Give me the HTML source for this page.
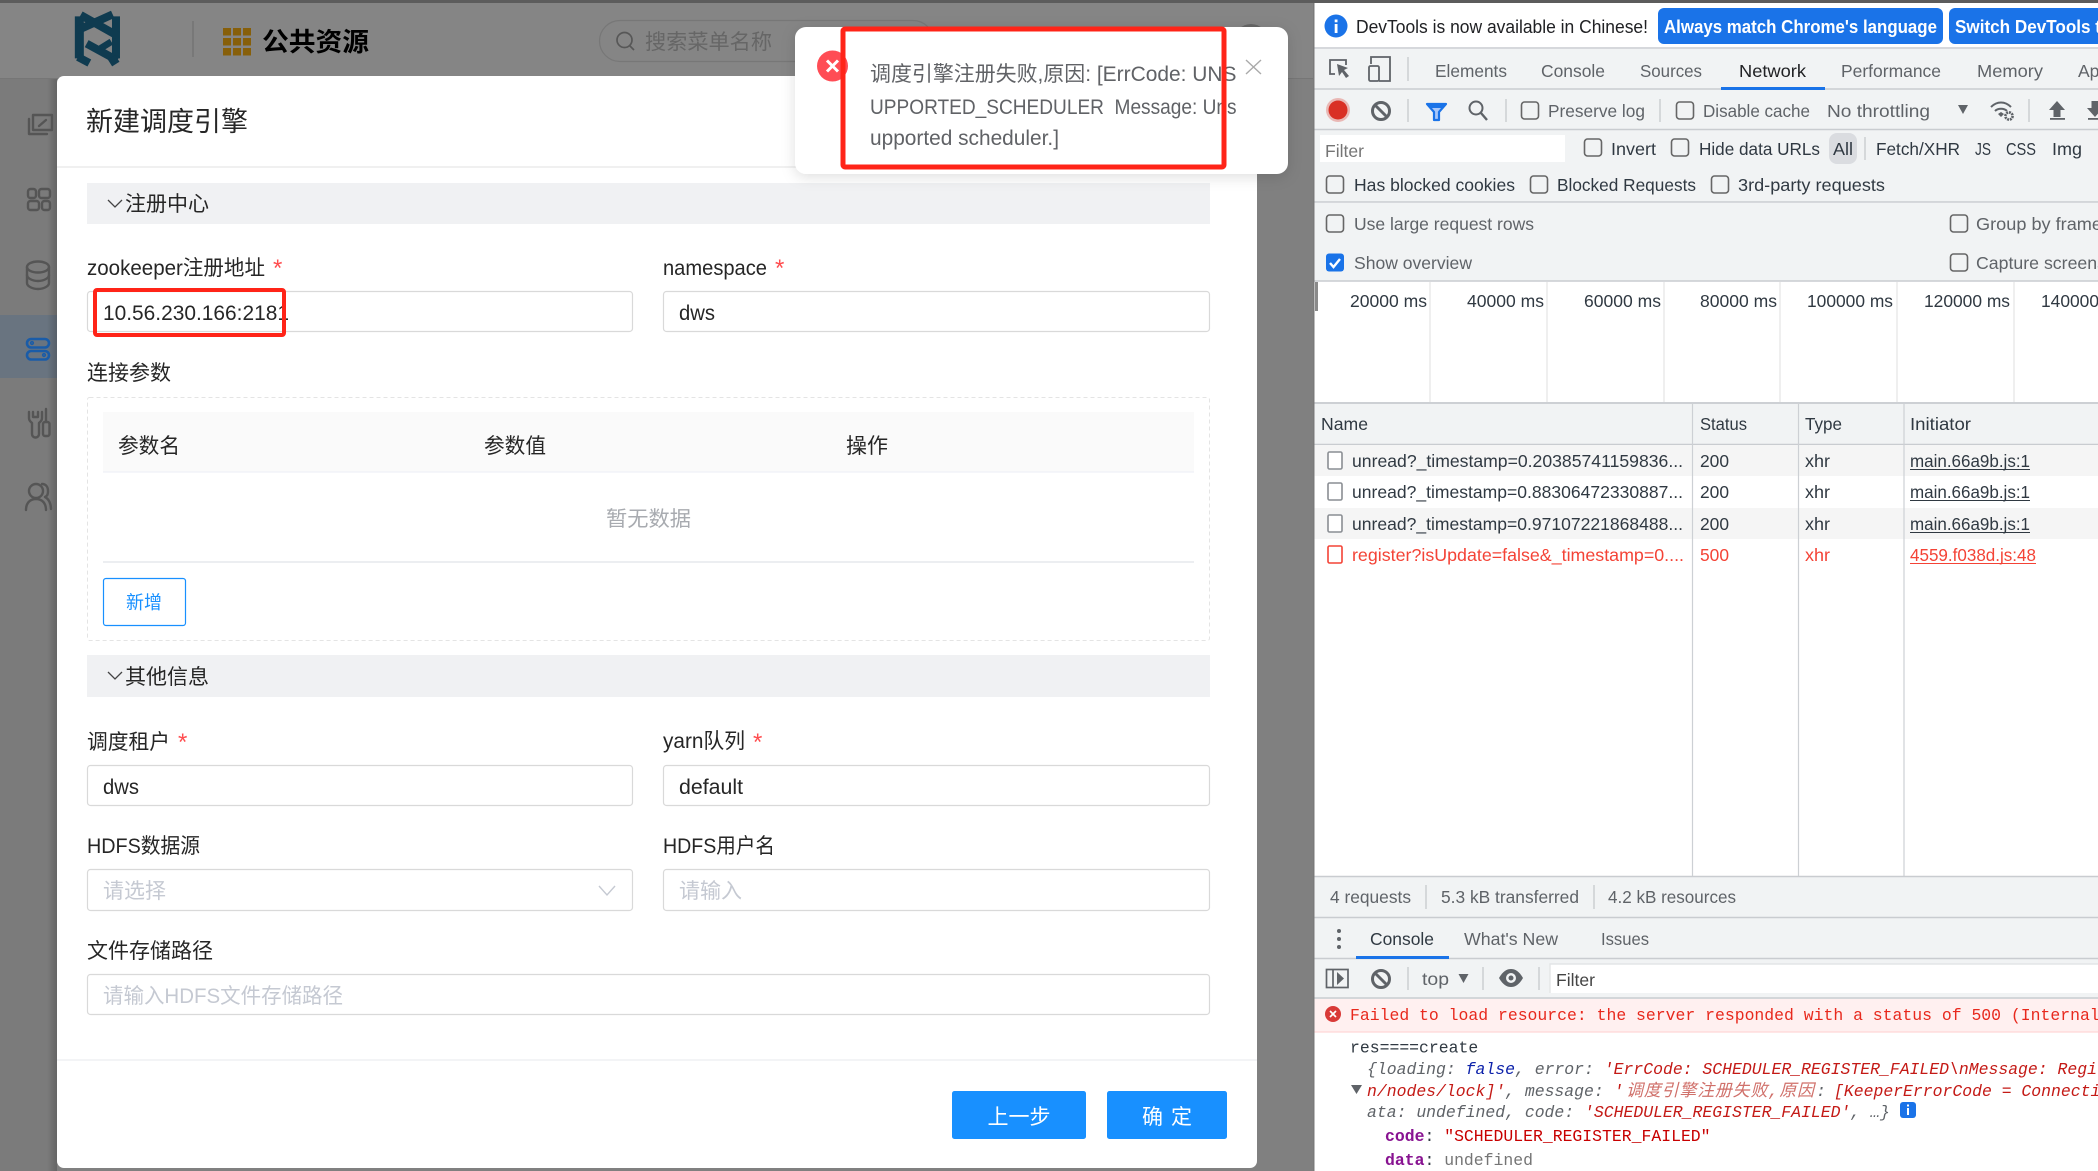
<!DOCTYPE html>
<html lang="zh">
<head>
<meta charset="utf-8">
<title>新建调度引擎</title>
<style>
html,body{margin:0;padding:0;width:2098px;height:1171px;overflow:hidden;background:#808080}
svg{display:block;font-family:"Liberation Sans","Noto Sans CJK SC",sans-serif}
.m{font-family:"Liberation Mono","Noto Sans CJK SC",monospace;font-size:16.45px}
.l{font-size:21px;fill:#262626}
.d{font-size:17.5px;fill:#5f6368}
.k{font-size:17.5px;fill:#303942}
.ck{fill:none;stroke:#666;stroke-width:1.6}
.ic{fill:none;stroke:#555;stroke-width:2.4;stroke-linecap:round;stroke-linejoin:round}
.inp{fill:#fff;stroke:#d9d9d9;stroke-width:1.2}
.sep{stroke:#c9ccd0;stroke-width:1.4}
</style>
</head>
<body>
<svg xmlns="http://www.w3.org/2000/svg" width="2098" height="1171" viewBox="0 0 2098 1171">
<defs>
<linearGradient id="sh" x1="0" x2="1" y1="0" y2="0"><stop offset="0" stop-color="#000" stop-opacity="0"/><stop offset="1" stop-color="#000" stop-opacity=".18"/></linearGradient>
<filter id="ts" x="-10%" y="-20%" width="120%" height="150%"><feDropShadow dx="0" dy="3" stdDeviation="7" flood-color="#000" flood-opacity=".13"/></filter>
</defs>

<!-- page behind overlay -->
<rect width="2098" height="1171" fill="#808080"/>
<rect width="1314" height="79" fill="#858585"/>
<rect y="0" width="2098" height="3" fill="#5c5c5c"/>
<rect y="79" width="57" height="1092" fill="#7b7b7b"/>
<rect y="315" width="57" height="63" fill="#697480"/>
<rect x="47" y="79" width="10" height="1092" fill="url(#sh)"/>
<line x1="0" x2="1314" y1="78.5" y2="78.5" stroke="#767676"/>

<!-- logo -->
<g transform="translate(60 5) scale(.3333)" fill="none" stroke="#0f3b50" stroke-width="24">
<path d="M58 34V160" stroke-width="27"/>
<path d="M168 34V160"/>
<path d="M52 76L158 28"/>
<path d="M62 30L172 92"/>
<path d="M80 116L172 166"/>
<path d="M154 110L122 130" stroke-width="20"/>
<path d="M54 156L88 174"/>
<path d="M172 160L150 174"/>
</g>
<line x1="193" x2="193" y1="21" y2="57" stroke="#757575" stroke-width="1.6"/>
<g fill="#875f0a">
<rect x="223" y="28" width="8" height="7.5"/><rect x="233" y="28" width="8" height="7.5"/><rect x="243" y="28" width="8" height="7.5"/>
<rect x="223" y="38" width="8" height="7.5"/><rect x="233" y="38" width="8" height="7.5"/><rect x="243" y="38" width="8" height="7.5"/>
<rect x="223" y="48" width="8" height="7.5"/><rect x="233" y="48" width="8" height="7.5"/><rect x="243" y="48" width="8" height="7.5"/>
</g>
<text x="262" y="51" font-size="26" font-weight="700" fill="#000" textLength="107" lengthAdjust="spacingAndGlyphs">公共资源</text>
<rect x="599.5" y="20.5" width="334" height="41" rx="20.5" fill="none" stroke="#777" stroke-width="1.2"/>
<circle cx="624.5" cy="40" r="7.5" fill="none" stroke="#575757" stroke-width="1.7"/><line x1="630" y1="46" x2="634" y2="50" stroke="#575757" stroke-width="1.7"/>
<text x="645" y="49" font-size="21" fill="#666" textLength="127" lengthAdjust="spacingAndGlyphs">搜索菜单名称</text>
<circle cx="1251" cy="41" r="17" fill="#666"/>

<!-- sidebar icons -->
<g class="ic">
<path d="M33 115h19v15H33z"/><path d="M29 119v15h18"/><path d="M39 126l7-6"/>
<rect x="28" y="189" width="8" height="9" rx="2.5"/><rect x="39" y="189" width="11" height="9" rx="2.5"/><rect x="28" y="201" width="11" height="9" rx="2.5"/><rect x="42" y="201" width="8" height="9" rx="2.5"/>
<ellipse cx="38" cy="267" rx="11" ry="5.5"/><path d="M27 267v16c0 3 5 6 11 6s11-3 11-6v-16"/><path d="M27 275c0 3 5 6 11 6s11-3 11-6"/>
<path d="M29 412v6c0 3 2 4 3 5v11a3.5 3.5 0 0 0 7 0v-11c1-1 3-2 3-5v-6M33 412v5h5v-5"/><path d="M46 409v13"/><rect x="43" y="422" width="6.5" height="14" rx="2"/>
<circle cx="36" cy="491" r="7"/><path d="M26 510c0-7 4-11 10-11s10 4 10 11"/><path d="M42 484c4 0 6 3 6 7s-1 5-3 6c4 2 6 7 6 12"/>
</g>
<g fill="none" stroke="#1a5ca8" stroke-width="2.6">
<rect x="27" y="339" width="22" height="8.5" rx="4.2"/><rect x="27" y="351" width="22" height="8.5" rx="4.2"/>
<circle cx="32" cy="343" r=".8"/><circle cx="44" cy="355" r=".8"/>
</g>

<!-- modal -->
<rect x="57" y="76" width="1200" height="1092" rx="7" fill="#fff"/>
<text x="86" y="131" font-size="27" fill="#262626" textLength="162" lengthAdjust="spacingAndGlyphs">新建调度引擎</text>
<line x1="57" x2="1257" y1="167" y2="167" stroke="#e8e8e8" stroke-width="1.2"/>

<rect x="87" y="183" width="1123" height="41" fill="#f0f1f3"/>
<path d="M108 200l7 7 7-7" fill="none" stroke="#444" stroke-width="1.3"/>
<text class="l" x="125" y="211" textLength="84" lengthAdjust="spacingAndGlyphs">注册中心</text>

<text class="l" x="87" y="275" textLength="178" lengthAdjust="spacingAndGlyphs">zookeeper注册地址</text>
<text x="273" y="276" font-size="24" fill="#ff4d4f">*</text>
<text class="l" x="663" y="275" textLength="104" lengthAdjust="spacingAndGlyphs">namespace</text>
<text x="775" y="276" font-size="24" fill="#ff4d4f">*</text>
<rect class="inp" x="87.5" y="291.5" width="545" height="40" rx="3"/>
<rect class="inp" x="663.5" y="291.5" width="546" height="40" rx="3"/>
<text class="l" x="103" y="320" textLength="186" lengthAdjust="spacingAndGlyphs">10.56.230.166:2181</text>
<text class="l" x="679" y="320" textLength="36" lengthAdjust="spacingAndGlyphs">dws</text>
<rect x="95" y="290" width="189" height="45" rx="2" fill="none" stroke="#ff2418" stroke-width="4"/>

<text class="l" x="87" y="380" textLength="84" lengthAdjust="spacingAndGlyphs">连接参数</text>
<rect x="87.5" y="397.5" width="1122" height="243" rx="2" fill="none" stroke="#e4e4e4" stroke-dasharray="4 3"/>
<rect x="103" y="412" width="1091" height="60" fill="#fafafa"/>
<line x1="103" x2="1194" y1="472" y2="472" stroke="#eff0f6" stroke-width="1.2"/>
<text class="l" x="118" y="453" textLength="62" lengthAdjust="spacingAndGlyphs">参数名</text>
<text class="l" x="484" y="453" textLength="62" lengthAdjust="spacingAndGlyphs">参数值</text>
<text class="l" x="846" y="453" textLength="42" lengthAdjust="spacingAndGlyphs">操作</text>
<text x="606" y="526" font-size="21" fill="#a8abb0" textLength="85" lengthAdjust="spacingAndGlyphs">暂无数据</text>
<line x1="103" x2="1194" y1="562" y2="562" stroke="#eceef1" stroke-width="2"/>
<rect x="103.5" y="578.5" width="82" height="47" rx="2.5" fill="#fff" stroke="#1890ff" stroke-width="1.2"/>
<text x="126" y="609" font-size="18.5" fill="#1890ff" textLength="36" lengthAdjust="spacingAndGlyphs">新增</text>

<rect x="87" y="655" width="1123" height="42" fill="#f0f1f3"/>
<path d="M108 672l7 7 7-7" fill="none" stroke="#444" stroke-width="1.3"/>
<text class="l" x="125" y="684" textLength="84" lengthAdjust="spacingAndGlyphs">其他信息</text>

<text class="l" x="87" y="749" textLength="83" lengthAdjust="spacingAndGlyphs">调度租户</text>
<text x="178" y="750" font-size="24" fill="#ff4d4f">*</text>
<text class="l" x="663" y="748" textLength="82" lengthAdjust="spacingAndGlyphs">yarn队列</text>
<text x="753" y="750" font-size="24" fill="#ff4d4f">*</text>
<rect class="inp" x="87.5" y="765.5" width="545" height="40" rx="3"/>
<rect class="inp" x="663.5" y="765.5" width="546" height="40" rx="3"/>
<text class="l" x="103" y="794" textLength="36" lengthAdjust="spacingAndGlyphs">dws</text>
<text class="l" x="679" y="794" textLength="64" lengthAdjust="spacingAndGlyphs">default</text>

<text class="l" x="87" y="853" textLength="113" lengthAdjust="spacingAndGlyphs">HDFS数据源</text>
<text class="l" x="663" y="853" textLength="112" lengthAdjust="spacingAndGlyphs">HDFS用户名</text>
<rect class="inp" x="87.5" y="869.5" width="545" height="41" rx="3"/>
<rect class="inp" x="663.5" y="869.5" width="546" height="41" rx="3"/>
<text x="103" y="898" font-size="21" fill="#c5c9d2" textLength="63" lengthAdjust="spacingAndGlyphs">请选择</text>
<path d="M599 886l8 9 8-9" fill="none" stroke="#c5c9d2" stroke-width="1.4"/>
<text x="679" y="898" font-size="21" fill="#c5c9d2" textLength="63" lengthAdjust="spacingAndGlyphs">请输入</text>

<text class="l" x="87" y="958" textLength="126" lengthAdjust="spacingAndGlyphs">文件存储路径</text>
<rect class="inp" x="87.5" y="974.5" width="1122" height="40" rx="3"/>
<text x="103" y="1003" font-size="21" fill="#c5c9d2" textLength="240" lengthAdjust="spacingAndGlyphs">请输入HDFS文件存储路径</text>

<line x1="57" x2="1257" y1="1060" y2="1060" stroke="#eceef0" stroke-width="1.2"/>
<rect x="952" y="1091" width="134" height="48" rx="2.5" fill="#1890ff"/>
<rect x="1107" y="1091" width="120" height="48" rx="2.5" fill="#1890ff"/>
<text x="987.5" y="1124" font-size="21" fill="#fff" textLength="63" lengthAdjust="spacingAndGlyphs">上一步</text>
<text x="1142" y="1124" font-size="21" fill="#fff" textLength="50">确 定</text>

<!-- toast -->
<rect x="795" y="27" width="493" height="147" rx="11" fill="#fff" filter="url(#ts)"/>
<circle cx="832.5" cy="66" r="15.5" fill="#ff4d55"/>
<path d="M827 60.5l11 11M838 60.5l-11 11" stroke="#fff" stroke-width="3"/>
<text x="870" y="81" font-size="21" fill="#606266" textLength="366.5" lengthAdjust="spacingAndGlyphs">调度引擎注册失败,原因: [ErrCode: UNS</text>
<text x="870" y="114" font-size="21" fill="#606266" textLength="366.5" lengthAdjust="spacingAndGlyphs">UPPORTED_SCHEDULER&#160; Message: Uns</text>
<text x="870" y="145" font-size="21" fill="#606266" textLength="189" lengthAdjust="spacingAndGlyphs">upported scheduler.]</text>
<path d="M1246 60l15 14M1261 60l-15 14" stroke="#aaa" stroke-width="1.4" fill="none"/>
<rect x="843" y="29" width="381" height="138" rx="2" fill="none" stroke="#ff2418" stroke-width="5"/>

<!-- devtools -->
<rect x="1314" y="3" width="784" height="1168" fill="#fff"/>
<!-- info bar -->
<line x1="1314" x2="2098" y1="48" y2="48" class="sep"/>
<circle cx="1336" cy="26" r="11.5" fill="#1a73e8"/>
<rect x="1334.7" y="24" width="2.8" height="9" fill="#fff"/><rect x="1334.7" y="19.5" width="2.8" height="2.8" fill="#fff"/>
<text x="1356" y="33" font-size="18" fill="#202124" textLength="292" lengthAdjust="spacingAndGlyphs">DevTools is now available in Chinese!</text>
<rect x="1658" y="8" width="285" height="36" rx="6" fill="#1a73e8"/>
<text x="1664" y="33" font-size="18" font-weight="700" fill="#fff" textLength="273" lengthAdjust="spacingAndGlyphs">Always match Chrome's language</text>
<rect x="1949" y="8" width="160" height="36" rx="6" fill="#1a73e8"/>
<text x="1955" y="33" font-size="18" font-weight="700" fill="#fff" textLength="146" lengthAdjust="spacingAndGlyphs">Switch DevTools t</text>

<!-- tab row -->
<rect x="1314" y="49" width="784" height="153" fill="#f1f3f4"/>
<g fill="none" stroke="#5f6368" stroke-width="1.8">
<path d="M1335 74h-5v-14h16v5"/>
<path d="M1371 64v-7h19v24h-11"/><rect x="1369" y="66" width="10" height="15" rx="1.5"/>
</g>
<path d="M1337 64l11 4-4 2 5 6-3 2-4-6-3 4z" fill="#5f6368"/>
<line class="sep" x1="1408" x2="1408" y1="57" y2="81"/>
<text class="d" x="1435" y="77" textLength="72" lengthAdjust="spacingAndGlyphs">Elements</text>
<text class="d" x="1541" y="77" textLength="64" lengthAdjust="spacingAndGlyphs">Console</text>
<text class="d" x="1640" y="77" textLength="62" lengthAdjust="spacingAndGlyphs">Sources</text>
<text class="d" style="fill:#202124" x="1739" y="77" textLength="67" lengthAdjust="spacingAndGlyphs">Network</text>
<text class="d" x="1841" y="77" textLength="100" lengthAdjust="spacingAndGlyphs">Performance</text>
<text class="d" x="1977" y="77" textLength="66" lengthAdjust="spacingAndGlyphs">Memory</text>
<text class="d" x="2078" y="77">Ap</text>
<line class="sep" x1="1314" x2="2098" y1="89" y2="89"/>
<rect x="1721" y="87" width="104" height="3" fill="#1a73e8"/>

<!-- network toolbar -->
<circle cx="1338" cy="110" r="12" fill="#e9b8b5"/><circle cx="1338" cy="110" r="9.5" fill="#d93025"/>
<circle cx="1381" cy="111" r="8.5" fill="none" stroke="#5f6368" stroke-width="3"/><line x1="1375" y1="105" x2="1387" y2="117" stroke="#5f6368" stroke-width="3"/>
<line class="sep" x1="1408" x2="1408" y1="99" y2="122"/>
<path d="M1427 104h19l-7 8v8h-5v-8z" fill="#a8c7fa" stroke="#1a73e8" stroke-width="2.2" stroke-linejoin="round"/>
<path d="M1427 104h19l-3.5 4h-12z" fill="#1a73e8"/>
<circle cx="1476" cy="108" r="6.5" fill="none" stroke="#5f6368" stroke-width="2"/><line x1="1481" y1="113" x2="1487" y2="120" stroke="#5f6368" stroke-width="2.4"/>
<line class="sep" x1="1506" x2="1506" y1="99" y2="122"/>
<rect class="ck" x="1521.5" y="102" width="17" height="17" rx="3"/>
<text class="d" x="1548" y="117" textLength="97" lengthAdjust="spacingAndGlyphs">Preserve log</text>
<line class="sep" x1="1660" x2="1660" y1="99" y2="122"/>
<rect class="ck" x="1676.5" y="102" width="17" height="17" rx="3"/>
<text class="d" x="1703" y="117" textLength="107" lengthAdjust="spacingAndGlyphs">Disable cache</text>
<text class="d" x="1827" y="117" textLength="103" lengthAdjust="spacingAndGlyphs">No throttling</text>
<path d="M1958 105h10l-5 9z" fill="#5f6368"/>
<g fill="none" stroke="#5f6368" stroke-width="2"><path d="M1991 107c6-6 14-6 20 0"/><path d="M1995 111c3-3 9-3 12 0"/></g>
<path d="M1998 114l3-2 3 2-3 3z" fill="#5f6368"/>
<circle cx="2009" cy="116" r="3.6" fill="none" stroke="#5f6368" stroke-width="2.6" stroke-dasharray="2 .8"/>
<line class="sep" x1="2029" x2="2029" y1="99" y2="122"/>
<path d="M2057 101l8 9h-4.5v7h-7v-7h-4.5z" fill="#5f6368"/><rect x="2050" y="118" width="15" height="1.8" fill="#5f6368"/>
<path d="M2095 117l8-9h-4.5v-7h-7v7h-4.5z" fill="#5f6368"/><rect x="2088" y="118" width="15" height="1.8" fill="#5f6368"/>
<line class="sep" x1="1314" x2="2098" y1="129.5" y2="129.5"/>

<!-- filter rows -->
<rect x="1320" y="135" width="245" height="27" fill="#fff"/>
<text x="1325" y="157" font-size="17.5" fill="#757575" textLength="39" lengthAdjust="spacingAndGlyphs">Filter</text>
<rect class="ck" x="1584.5" y="139" width="17" height="17" rx="3"/>
<text class="k" x="1611" y="155" textLength="45" lengthAdjust="spacingAndGlyphs">Invert</text>
<rect class="ck" x="1671.5" y="139" width="17" height="17" rx="3"/>
<text class="k" x="1699" y="155" textLength="121" lengthAdjust="spacingAndGlyphs">Hide data URLs</text>
<rect x="1829" y="133" width="28" height="31" rx="8" fill="#dadce0"/>
<text class="k" x="1833" y="155" textLength="20" lengthAdjust="spacingAndGlyphs">All</text>
<line class="sep" x1="1865" x2="1865" y1="137" y2="160"/>
<text class="k" x="1876" y="155" textLength="84" lengthAdjust="spacingAndGlyphs">Fetch/XHR</text>
<text class="k" x="1975" y="155" textLength="16" lengthAdjust="spacingAndGlyphs">JS</text>
<text class="k" x="2006" y="155" textLength="30" lengthAdjust="spacingAndGlyphs">CSS</text>
<text class="k" x="2052" y="155" textLength="30" lengthAdjust="spacingAndGlyphs">Img</text>

<rect class="ck" x="1326.5" y="176" width="17" height="17" rx="3"/>
<text class="k" x="1354" y="191" textLength="161" lengthAdjust="spacingAndGlyphs">Has blocked cookies</text>
<rect class="ck" x="1530.5" y="176" width="17" height="17" rx="3"/>
<text class="k" x="1557" y="191" textLength="139" lengthAdjust="spacingAndGlyphs">Blocked Requests</text>
<rect class="ck" x="1711.5" y="176" width="17" height="17" rx="3"/>
<text class="k" x="1738" y="191" textLength="147" lengthAdjust="spacingAndGlyphs">3rd-party requests</text>
<line class="sep" x1="1314" x2="2098" y1="202" y2="202"/>

<!-- settings -->
<rect x="1314" y="203" width="784" height="78" fill="#f1f3f4"/>
<rect class="ck" x="1326.5" y="215" width="17" height="17" rx="3"/>
<text class="d" x="1354" y="230" textLength="180" lengthAdjust="spacingAndGlyphs">Use large request rows</text>
<rect class="ck" x="1950.5" y="215" width="17" height="17" rx="3"/>
<text class="d" x="1976" y="230" textLength="126" lengthAdjust="spacingAndGlyphs">Group by frame</text>
<rect x="1326" y="253.5" width="18" height="18" rx="3" fill="#1a73e8"/>
<path d="M1330 263l3.5 4 6.5-8" fill="none" stroke="#fff" stroke-width="2.4"/>
<text class="d" x="1354" y="269" textLength="118" lengthAdjust="spacingAndGlyphs">Show overview</text>
<rect class="ck" x="1950.5" y="254" width="17" height="17" rx="3"/>
<text class="d" x="1976" y="269" textLength="130" lengthAdjust="spacingAndGlyphs">Capture screens</text>
<line class="sep" x1="1314" x2="2098" y1="281" y2="281"/>

<!-- overview -->
<rect x="1315" y="282" width="3" height="29" fill="#8a8a8a"/>
<g stroke="#e4e4e4" stroke-width="1.2"><line x1="1430" x2="1430" y1="282" y2="402"/><line x1="1547" x2="1547" y1="282" y2="402"/><line x1="1664" x2="1664" y1="282" y2="402"/><line x1="1780" x2="1780" y1="282" y2="402"/><line x1="1897" x2="1897" y1="282" y2="402"/><line x1="2014" x2="2014" y1="282" y2="402"/></g>
<text class="k" x="1350" y="307" textLength="77" lengthAdjust="spacingAndGlyphs">20000 ms</text>
<text class="k" x="1467" y="307" textLength="77" lengthAdjust="spacingAndGlyphs">40000 ms</text>
<text class="k" x="1584" y="307" textLength="77" lengthAdjust="spacingAndGlyphs">60000 ms</text>
<text class="k" x="1700" y="307" textLength="77" lengthAdjust="spacingAndGlyphs">80000 ms</text>
<text class="k" x="1807" y="307" textLength="86" lengthAdjust="spacingAndGlyphs">100000 ms</text>
<text class="k" x="1924" y="307" textLength="86" lengthAdjust="spacingAndGlyphs">120000 ms</text>
<text class="k" x="2041" y="307" textLength="86" lengthAdjust="spacingAndGlyphs">140000 ms</text>
<rect x="1314" y="402" width="784" height="2.5" fill="#cdd0d4"/>

<!-- network table -->
<rect x="1314" y="404" width="784" height="40" fill="#f1f3f4"/>
<line class="sep" x1="1314" x2="2098" y1="444.5" y2="444.5"/>
<rect x="1314" y="445" width="784" height="31" fill="#f5f5f5"/>
<rect x="1314" y="508" width="784" height="31" fill="#f5f5f5"/>
<g stroke="#cdd0d4" stroke-width="1.2"><line x1="1692.5" x2="1692.5" y1="404" y2="876"/><line x1="1798.5" x2="1798.5" y1="404" y2="876"/><line x1="1904" x2="1904" y1="404" y2="876"/></g>
<text class="k" x="1321" y="430" textLength="47" lengthAdjust="spacingAndGlyphs">Name</text>
<text class="k" x="1700" y="430" textLength="47" lengthAdjust="spacingAndGlyphs">Status</text>
<text class="k" x="1805" y="430" textLength="37" lengthAdjust="spacingAndGlyphs">Type</text>
<text class="k" x="1910" y="430" textLength="61" lengthAdjust="spacingAndGlyphs">Initiator</text>

<g fill="#fff" stroke="#8a8e93" stroke-width="1.6">
<rect x="1328" y="452" width="14" height="17" rx="1.5"/><rect x="1328" y="483" width="14" height="17" rx="1.5"/><rect x="1328" y="515" width="14" height="17" rx="1.5"/>
</g>
<rect x="1328" y="546" width="14" height="17" rx="1.5" fill="#fff" stroke="#f44336" stroke-width="1.6"/>
<text class="k" x="1352" y="467" textLength="331" lengthAdjust="spacingAndGlyphs">unread?_timestamp=0.20385741159836...</text>
<text class="k" x="1352" y="498" textLength="331" lengthAdjust="spacingAndGlyphs">unread?_timestamp=0.88306472330887...</text>
<text class="k" x="1352" y="530" textLength="331" lengthAdjust="spacingAndGlyphs">unread?_timestamp=0.97107221868488...</text>
<text class="k" x="1700" y="467" textLength="29" lengthAdjust="spacingAndGlyphs">200</text>
<text class="k" x="1700" y="498" textLength="29" lengthAdjust="spacingAndGlyphs">200</text>
<text class="k" x="1700" y="530" textLength="29" lengthAdjust="spacingAndGlyphs">200</text>
<text class="k" x="1805" y="467" textLength="25" lengthAdjust="spacingAndGlyphs">xhr</text>
<text class="k" x="1805" y="498" textLength="25" lengthAdjust="spacingAndGlyphs">xhr</text>
<text class="k" x="1805" y="530" textLength="25" lengthAdjust="spacingAndGlyphs">xhr</text>
<text class="k" x="1910" y="467" textLength="120" lengthAdjust="spacingAndGlyphs">main.66a9b.js:1</text>
<text class="k" x="1910" y="498" textLength="120" lengthAdjust="spacingAndGlyphs">main.66a9b.js:1</text>
<text class="k" x="1910" y="530" textLength="120" lengthAdjust="spacingAndGlyphs">main.66a9b.js:1</text>
<g stroke="#303942" stroke-width="1.1"><line x1="1910" x2="2030" y1="469.5" y2="469.5"/><line x1="1910" x2="2030" y1="500.5" y2="500.5"/><line x1="1910" x2="2030" y1="532.5" y2="532.5"/></g>
<text class="k" style="fill:#f44336" x="1352" y="561" textLength="332" lengthAdjust="spacingAndGlyphs">register?isUpdate=false&amp;_timestamp=0....</text>
<text class="k" style="fill:#f44336" x="1700" y="561" textLength="29" lengthAdjust="spacingAndGlyphs">500</text>
<text class="k" style="fill:#f44336" x="1805" y="561" textLength="25" lengthAdjust="spacingAndGlyphs">xhr</text>
<text class="k" style="fill:#f44336" x="1910" y="561" textLength="126" lengthAdjust="spacingAndGlyphs">4559.f038d.js:48</text>
<line x1="1910" x2="2036" y1="563.5" y2="563.5" stroke="#f44336" stroke-width="1.1"/>

<!-- status bar -->
<rect x="1314" y="876" width="784" height="123" fill="#f1f3f4"/>
<line class="sep" x1="1314" x2="2098" y1="876.5" y2="876.5"/>
<text class="d" x="1330" y="903" textLength="81" lengthAdjust="spacingAndGlyphs">4 requests</text>
<line class="sep" x1="1426" x2="1426" y1="885" y2="909"/>
<text class="d" x="1441" y="903" textLength="138" lengthAdjust="spacingAndGlyphs">5.3 kB transferred</text>
<line class="sep" x1="1594" x2="1594" y1="885" y2="909"/>
<text class="d" x="1608" y="903" textLength="128" lengthAdjust="spacingAndGlyphs">4.2 kB resources</text>
<line class="sep" x1="1314" x2="2098" y1="917.5" y2="917.5"/>

<!-- drawer -->
<circle cx="1339" cy="931" r="2" fill="#5f6368"/><circle cx="1339" cy="939" r="2" fill="#5f6368"/><circle cx="1339" cy="947" r="2" fill="#5f6368"/>
<text class="d" style="fill:#303942" x="1370" y="945" textLength="64" lengthAdjust="spacingAndGlyphs">Console</text>
<text class="d" x="1464" y="945" textLength="94" lengthAdjust="spacingAndGlyphs">What's New</text>
<text class="d" x="1601" y="945" textLength="48" lengthAdjust="spacingAndGlyphs">Issues</text>
<line class="sep" x1="1314" x2="2098" y1="958.5" y2="958.5"/>
<rect x="1356" y="956" width="93" height="3" fill="#1a73e8"/>
<rect x="1326.5" y="969.5" width="21.5" height="18" fill="none" stroke="#5f6368" stroke-width="1.7"/><line x1="1333" x2="1333" y1="969" y2="988" stroke="#5f6368" stroke-width="1.7"/><path d="M1337 972l7 6.5-7 6.5z" fill="#5f6368"/>
<circle cx="1381" cy="979" r="8.5" fill="none" stroke="#5f6368" stroke-width="3"/><line x1="1375" y1="973" x2="1387" y2="985" stroke="#5f6368" stroke-width="3"/>
<line class="sep" x1="1408" x2="1408" y1="967" y2="990"/>
<text class="d" x="1422" y="985" textLength="27" lengthAdjust="spacingAndGlyphs">top</text>
<path d="M1458.5 974h10l-5 9z" fill="#5f6368"/>
<line class="sep" x1="1483" x2="1483" y1="967" y2="990"/>
<path d="M1499 978c4-7 8-9 12-9s8 2 12 9c-4 7-8 9-12 9s-8-2-12-9z" fill="#5f6368"/><circle cx="1511" cy="978" r="5" fill="#f1f3f4"/><circle cx="1511" cy="978" r="2.5" fill="#5f6368"/>
<line class="sep" x1="1539" x2="1539" y1="967" y2="990"/>
<rect x="1550" y="964" width="548" height="29" fill="#fff"/>
<path d="M1550 993v-29h548" fill="none" stroke="#e3e5e7" stroke-width="1.4"/>
<text x="1556" y="986" font-size="17.5" fill="#444" textLength="39" lengthAdjust="spacingAndGlyphs">Filter</text>
<line class="sep" x1="1314" x2="2098" y1="998" y2="998"/>

<!-- console -->
<rect x="1314" y="999" width="784" height="172" fill="#fff"/>
<rect x="1314" y="999" width="784" height="33" fill="#fff0f0"/>
<line x1="1314" x2="2098" y1="1032" y2="1032" stroke="#ffd6d6" stroke-width="1.2"/>
<circle cx="1333" cy="1014" r="8" fill="#d93a38"/><path d="M1330 1011l6 6M1336 1011l-6 6" stroke="#fff" stroke-width="1.7"/>
<text class="m" x="1350" y="1020" fill="#e8291d">Failed to load resource: the server responded with a status of 500 (Internal</text>
<text class="m" x="1350" y="1052.5" fill="#303942">res====create</text>
<text class="m" x="1367" y="1074" font-style="italic" fill="#5f6368">{loading: <tspan fill="#0d22aa">false</tspan>, error: <tspan fill="#c41a16">'ErrCode: SCHEDULER_REGISTER_FAILED\nMessage: Regi</tspan></text>
<path d="M1351 1085h11l-5.5 9z" fill="#5f6368"/>
<text class="m" x="1367" y="1096" font-style="italic" fill="#5f6368"><tspan fill="#c41a16">n/nodes/lock]'</tspan>, message: <tspan fill="#c41a16">'</tspan><tspan font-size="17" fill="#d0706a" textLength="188" x="1626">调度引擎注册失败,原因</tspan><tspan x="1816">:</tspan><tspan fill="#c41a16" x="1834">[KeeperErrorCode = Connecti</tspan></text>
<text class="m" x="1367" y="1117" font-style="italic" fill="#5f6368">ata: undefined, code: <tspan fill="#c41a16">'SCHEDULER_REGISTER_FAILED'</tspan>, …}</text>
<rect x="1900" y="1102" width="16" height="16" rx="3" fill="#1a73e8"/>
<rect x="1907" y="1108" width="2" height="7" fill="#fff"/><rect x="1907" y="1104.5" width="2" height="2" fill="#fff"/>
<text class="m" x="1385" y="1141" fill="#303942"><tspan font-weight="700" fill="#881391">code</tspan>: <tspan fill="#c80000">"SCHEDULER_REGISTER_FAILED"</tspan></text>
<text class="m" x="1385" y="1165" fill="#303942"><tspan font-weight="700" fill="#881391">data</tspan>: <tspan fill="#757575">undefined</tspan></text>
<rect x="1313" y="3" width="1.5" height="1168" fill="#7a7a7a"/>
</svg>
</body>
</html>
